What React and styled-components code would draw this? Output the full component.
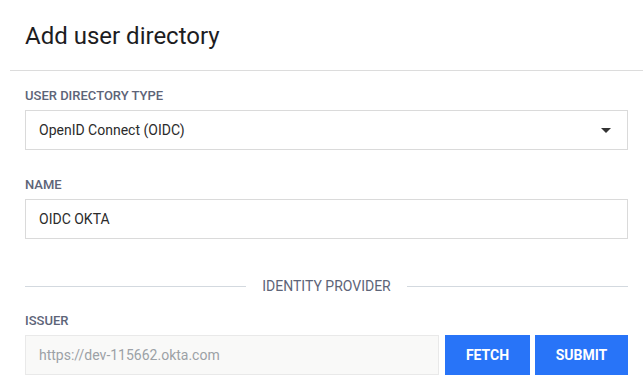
import React from "react";
import styled, { createGlobalStyle } from "styled-components";

const GlobalStyle = createGlobalStyle`
  html, body {
    margin: 0;
    padding: 0;
    background: #ffffff;
  }
  body {
    font-family: Roboto, "Liberation Sans", Arial, sans-serif;
  }
  * {
    box-sizing: border-box;
  }
`;

const Dialog = styled.div`
  width: 643px;
  padding-left: 10px;
  background: #ffffff;
`;

const Header = styled.div`
  padding: 22px 15px 20px;
  border-bottom: 1px solid #dcdcdc;
  h2 {
    margin: 0;
    font-size: 24px;
    line-height: 28px;
    font-weight: 400;
    color: #1d1d1f;
  }
`;

const Body = styled.div`
  padding: 17px 15px 0;
  display: flex;
  flex-direction: column;
`;

const Field = styled.div`
  display: flex;
  flex-direction: column;
  margin-bottom: ${(p) => p.$spacing || 27}px;
`;

const Label = styled.label`
  font-size: 13px;
  line-height: 16px;
  font-weight: 500;
  color: #5d6478;
  text-transform: uppercase;
  margin-bottom: 6px;
`;

const Box = styled.div`
  height: 40px;
  display: flex;
  align-items: center;
  justify-content: space-between;
  padding: 0 16px 0 13px;
  border: 1px solid ${(p) => (p.$disabled ? "#e9e9e9" : "#dadada")};
  background: ${(p) => (p.$disabled ? "#f9f9f8" : "#ffffff")};
  font-size: 14px;
  color: ${(p) => (p.$disabled ? "#9ca1a6" : "#2b2b2b")};
`;

const Separator = styled.div`
  display: flex;
  align-items: center;
  gap: 16px;
  margin-bottom: 19px;
  span {
    font-size: 14px;
    line-height: 16px;
    color: #5d6478;
    text-transform: uppercase;
    white-space: nowrap;
  }
  &::before,
  &::after {
    content: "";
    flex: 1;
    height: 1px;
    background: #d3d9df;
  }
`;

const Row = styled.div`
  display: flex;
  align-items: stretch;
  > ${Box} {
    flex: 1;
  }
`;

const Button = styled.button`
  height: 40px;
  width: ${(p) => p.$width}px;
  flex-shrink: 0;
  margin-left: ${(p) => p.$gap}px;
  padding: 0;
  border: none;
  background: #2874f8;
  color: #ffffff;
  font-family: Roboto, "Liberation Sans", Arial, sans-serif;
  font-size: 14px;
  font-weight: 700;
  text-transform: uppercase;
  cursor: pointer;
`;

const Caret = () => (
  <svg width="10" height="5" viewBox="0 0 10 5">
    <polygon points="0,0 10,0 5,5" fill="#333333" />
  </svg>
);

export default function App() {
  return (
    <>
      <GlobalStyle />
      <Dialog>
        <Header>
          <h2>Add user directory</h2>
        </Header>
        <Body>
          <Field>
            <Label>User directory type</Label>
            <Box>
              <span>OpenID Connect (OIDC)</span>
              <Caret />
            </Box>
          </Field>
          <Field $spacing={39}>
            <Label>Name</Label>
            <Box>OIDC OKTA</Box>
          </Field>
          <Separator>
            <span>Identity provider</span>
          </Separator>
          <Field>
            <Label>Issuer</Label>
            <Row>
              <Box $disabled>https://dev-115662.okta.com</Box>
              <Button $gap={6} $width={85}>
                Fetch
              </Button>
              <Button $gap={5} $width={93}>
                Submit
              </Button>
            </Row>
          </Field>
        </Body>
      </Dialog>
    </>
  );
}
